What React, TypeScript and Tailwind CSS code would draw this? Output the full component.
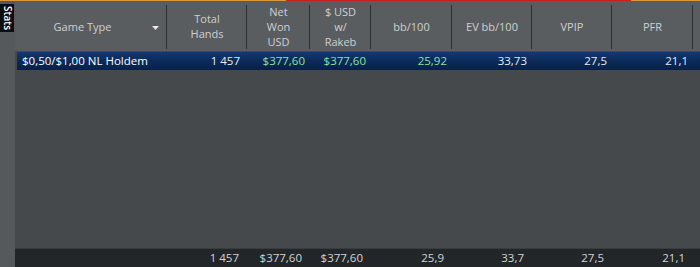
import React from "react";

const cols = "grid grid-cols-[152px_80px_63px_61px_81px_80px_80px_81px_1fr]";

const headers: { label: string[]; arrow?: boolean }[] = [
  { label: ["Game Type"], arrow: true },
  { label: ["Total", "Hands"] },
  { label: ["Net", "Won", "USD"] },
  { label: ["$ USD", "w/", "Rakeb"] },
  { label: ["bb/100"] },
  { label: ["EV bb/100"] },
  { label: ["VPIP"] },
  { label: ["PFR"] },
];

const rowVals: { v: string; green?: boolean }[] = [
  { v: "1 457" },
  { v: "$377,60", green: true },
  { v: "$377,60", green: true },
  { v: "25,92", green: true },
  { v: "33,73" },
  { v: "27,5" },
  { v: "21,1" },
];

const footVals = ["1 457", "$377,60", "$377,60", "25,9", "33,7", "27,5", "21,1"];

export default function App() {
  return (
    <div
      className="w-[700px] h-[267px] flex flex-col overflow-hidden bg-[#46494c] text-[11.5px]"
      style={{ fontFamily: '"Open Sans", "Noto Sans", sans-serif' }}
    >
      <div className="flex h-[1px] shrink-0">
        <div className="w-[286px] bg-[#d89a3c]" />
        <div className="w-[345px] bg-[#c8201c]" />
        <div className="flex-1 bg-[#d89a3c]" />
      </div>
      <div className="flex flex-1 min-h-0">
        <div className="w-[15px] shrink-0 bg-[#55595c] pt-[3px]">
          <div
            className="bg-[#0d0d0d] text-white text-[10px] leading-[13px] h-[28px] w-[14px] flex items-center justify-center font-semibold"
            style={{ writingMode: "vertical-rl" }}
          >
            Stats
          </div>
        </div>
        <div className="flex-1 flex flex-col min-w-0">
          <div className={`${cols} h-[50px] shrink-0 bg-[#5a5d60] text-[#cdd0d2] text-[11px]`}>
            {headers.map((h, i) => (
              <div key={i} className="relative flex items-center h-full">
                <div
                  className={`flex-1 flex flex-col items-center justify-center text-center ${
                    h.arrow ? "pr-[17px]" : ""
                  }`}
                >
                  {h.label.map((l, j) => (
                    <span key={j} className="block leading-[15px] h-[15px]">
                      {l}
                    </span>
                  ))}
                </div>
                {h.arrow && (
                  <svg className="absolute right-[8px] top-[25px]" width="7" height="4" viewBox="0 0 7 4">
                    <path d="M0 0h7L3.5 4z" fill="#e6e6e6" />
                  </svg>
                )}
                <div className="absolute right-0 top-[4px] bottom-[2px] w-[1px] bg-[#2c2e30]" />
              </div>
            ))}
            <div />
          </div>
          <div className="h-[1px] shrink-0" />
          <div
            className={`${cols} ml-[2px] h-[18px] shrink-0 items-center text-white bg-gradient-to-b from-[#123a70] via-[#0b2a5a] to-[#082048]`}
          >
            <div className="pl-[5px] whitespace-nowrap -mr-[2px]">$0,50/$1,00 NL Holdem</div>
            {rowVals.map((c, i) => (
              <div
                key={i}
                className={`text-right ${i === 0 ? "pr-[9px]" : "pr-[7px]"} ${
                  c.green ? "text-[#8ee39a]" : "text-[#e8ecf2]"
                }`}
              >
                {c.v}
              </div>
            ))}
            <div />
          </div>
          <div className="flex-1 bg-[#46494c]" />
          <div className="h-[1px] shrink-0 bg-[#3a3d40]" />
          <div className={`${cols} h-[18px] shrink-0 items-center bg-[#222629] text-[#d2d4d6]`}>
            <div />
            {footVals.map((v, i) => (
              <div key={i} className="text-right pr-[8px]">
                {v}
              </div>
            ))}
            <div />
          </div>
        </div>
      </div>
    </div>
  );
}
